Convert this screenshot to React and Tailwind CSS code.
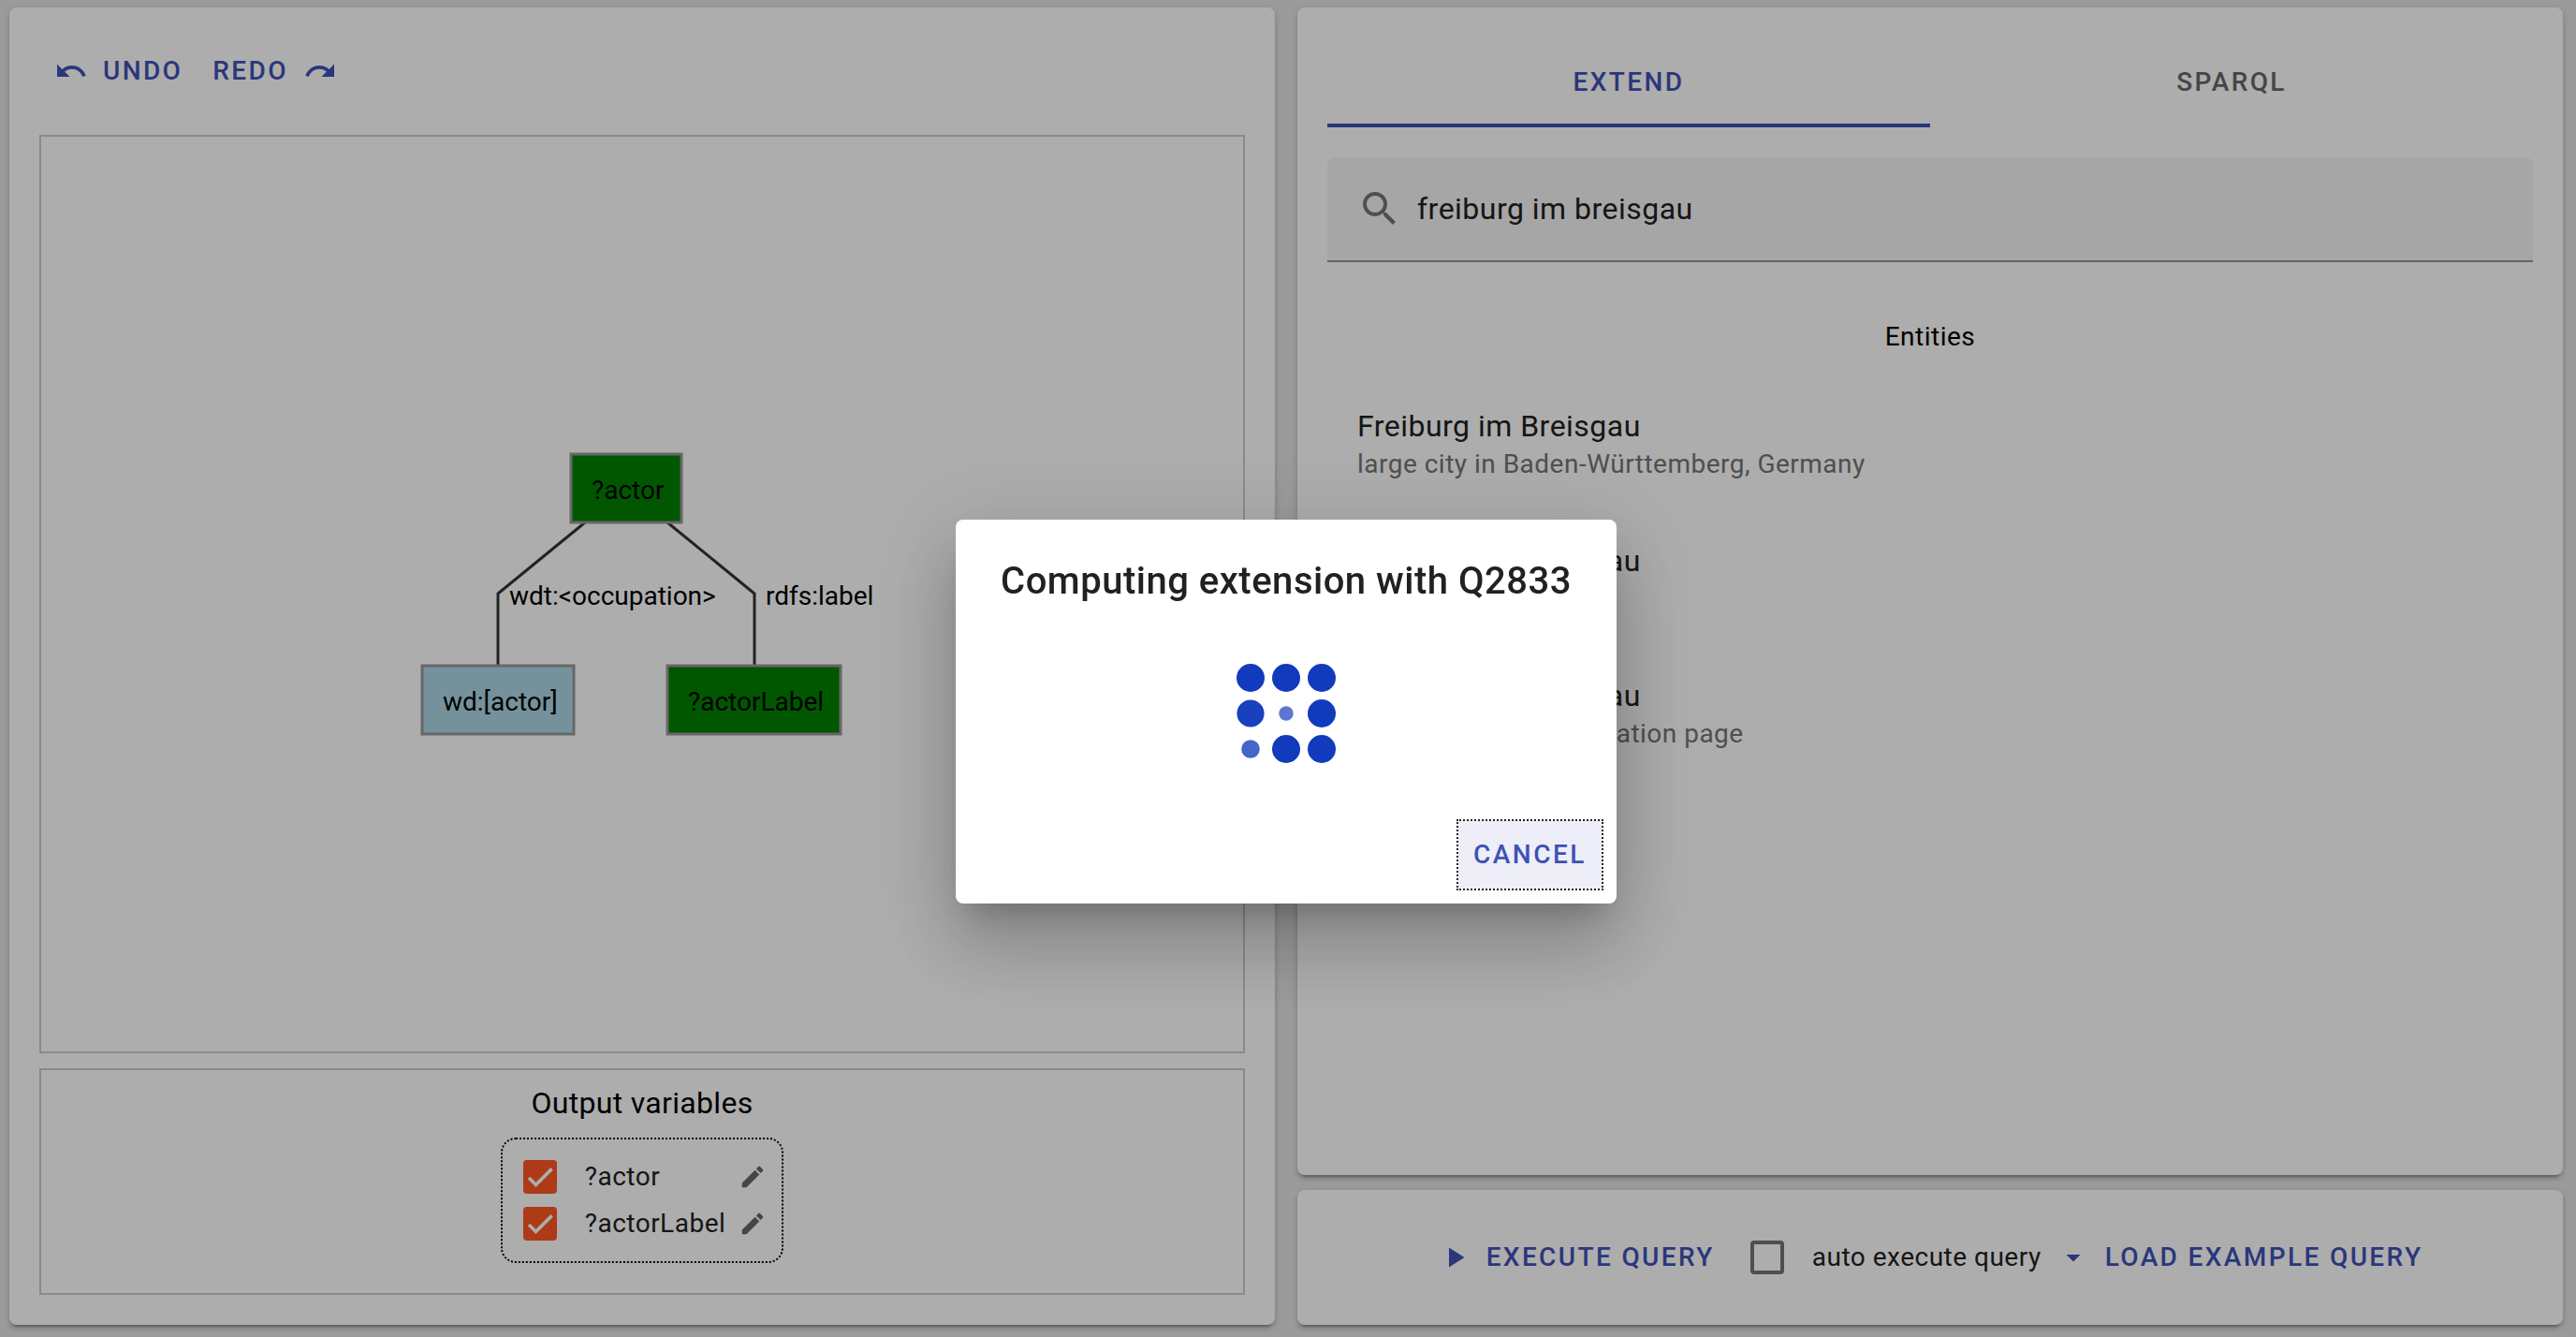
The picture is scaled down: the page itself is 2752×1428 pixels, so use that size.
import React from "react";

const ICONS = {
  undo: "M12.5 8c-2.65 0-5.05.99-6.9 2.6L2 7v9h9l-3.62-3.62c1.39-1.16 3.16-1.88 5.12-1.88 3.54 0 6.55 2.31 7.6 5.5l2.37-.78C21.08 11.03 17.15 8 12.5 8z",
  redo: "M18.4 10.6C16.55 8.99 14.15 8 11.5 8c-4.65 0-8.58 3.03-9.96 7.22L3.9 16c1.05-3.19 4.05-5.5 7.6-5.5 1.95 0 3.73.72 5.12 1.88L13 16h9V7l-3.6 3.6z",
  play: "M8 5v14l11-7z",
  dropDown: "M7 10l5 5 5-5z",
  edit: "M3 17.25V21h3.75L17.81 9.94l-3.75-3.75L3 17.25zM20.71 7.04c.39-.39.39-1.02 0-1.41l-2.34-2.34c-.39-.39-1.02-.39-1.41 0l-1.83 1.83 3.75 3.75 1.83-1.83z",
  search:
    "M15.5 14h-.79l-.28-.27C15.41 12.59 16 11.11 16 9.5 16 5.91 13.09 3 9.5 3S3 5.91 3 9.5 5.91 16 9.5 16c1.61 0 3.09-.59 4.23-1.57l.27.28v.79l5 4.99L20.49 19l-4.99-5zm-6 0C7.01 14 5 11.99 5 9.5S7.01 5 9.5 5 14 7.01 14 9.5 11.99 14 9.5 14z",
};

function Icon({ name, className }) {
  return (
    <svg viewBox="0 0 24 24" fill="currentColor" aria-hidden="true" className={className}>
      <path d={ICONS[name]} />
    </svg>
  );
}

function TextButton({ icon, trailingIcon, children }) {
  return (
    <button
      type="button"
      className="flex h-18 items-center gap-4 rounded-lg px-4 text-[28px] font-medium tracking-[0.085em] text-[#3f51b5] uppercase"
    >
      {icon && <Icon name={icon} className="size-9" />}
      {children}
      {trailingIcon && <Icon name={trailingIcon} className="size-9" />}
    </button>
  );
}

function Card({ className, children }) {
  return (
    <section
      className={
        "rounded-lg bg-white shadow-[0_6px_2px_-4px_rgba(0,0,0,0.2),0_4px_4px_0_rgba(0,0,0,0.14),0_2px_10px_0_rgba(0,0,0,0.12)] " +
        className
      }
    >
      {children}
    </section>
  );
}

function Checkbox({ id, defaultChecked }) {
  return (
    <span className="relative flex size-9 shrink-0">
      <input
        id={id}
        type="checkbox"
        defaultChecked={defaultChecked}
        className="peer size-9 appearance-none rounded-sm border-4 border-[#757575] checked:border-[#ff5722] checked:bg-[#ff5722]"
      />
      <svg
        viewBox="0 0 24 24"
        fill="none"
        aria-hidden="true"
        className="pointer-events-none absolute inset-1 hidden size-7 stroke-white peer-checked:block"
      >
        <path d="M1.73 12.91L8.1 19.28 22.79 4.59" strokeWidth="3.12" />
      </svg>
    </span>
  );
}

function QueryGraph() {
  return (
    <svg viewBox="436 481 500 307" className="h-[307px] w-[500px] text-[28px]" role="img" aria-label="Query graph">
      <g fill="none" stroke="#333" strokeWidth="3">
        <path d="M625 558L532 634V711" />
        <path d="M713 558L806 634V711" />
      </g>
      <g stroke="#999" strokeWidth="3">
        <rect x="610" y="485" width="118" height="73" fill="#008000" />
        <rect x="451" y="711" width="162" height="73" fill="#add8e6" />
        <rect x="713" y="711" width="185" height="73" fill="#008000" />
      </g>
      <g fill="#000">
        <text x="632" y="533">?actor</text>
        <text x="473" y="759">wd:[actor]</text>
        <text x="735" y="759">?actorLabel</text>
        <text x="544" y="646">wdt:&lt;occupation&gt;</text>
        <text x="818" y="646">rdfs:label</text>
      </g>
    </svg>
  );
}

function OutputVariable({ name }) {
  const id = "output-" + name.slice(1);
  return (
    <li className="flex items-center">
      <Checkbox id={id} defaultChecked />
      <label htmlFor={id} className="ml-[30px] text-[28px] leading-9 tracking-[0.0175em] text-[#212121]">
        {name}
      </label>
      <button type="button" aria-label={"Rename " + name} className="ml-auto pl-[14px] text-[#666]">
        <Icon name="edit" className="size-[30px]" />
      </button>
    </li>
  );
}

const ENTITIES = [
  { id: 1, label: "Freiburg im Breisgau", description: "large city in Baden-Württemberg, Germany" },
  { id: 2, label: "Freiburg im Breisgau", description: "" },
  { id: 3, label: "Freiburg im Breisgau", description: "Wikimedia disambiguation page" },
];

function EntityList() {
  return (
    <ul className="mt-[14px] py-4">
      {ENTITIES.map((entity) => (
        <li key={entity.id}>
          <button type="button" className="flex h-36 w-full flex-col px-8 pt-6 text-left">
            <span className="text-[32px] leading-[42px] tracking-[0.015em] text-[#212121]">{entity.label}</span>
            <span className="text-[28px] leading-10 tracking-[0.0175em] text-[#757575]">{entity.description}</span>
          </button>
        </li>
      ))}
    </ul>
  );
}

function Tab({ active, children }) {
  return (
    <button
      type="button"
      role="tab"
      aria-selected={active}
      className={
        "h-24 flex-1 border-y-4 border-t-transparent text-[28px] font-medium tracking-[0.085em] uppercase " +
        (active ? "border-b-[#3f51b5] text-[#3f51b5]" : "border-b-transparent text-[#666]")
      }
    >
      {children}
    </button>
  );
}

const DOTS = [
  { r: 15, o: 1 },
  { r: 15, o: 1 },
  { r: 15, o: 1 },
  { r: 14.6, o: 0.97 },
  { r: 7.7, o: 0.69 },
  { r: 15, o: 1 },
  { r: 9.8, o: 0.78 },
  { r: 15, o: 1 },
  { r: 15, o: 1 },
];

function Spinner() {
  return (
    <svg viewBox="0 0 106 106" fill="#123abc" className="size-[106px]" role="img" aria-label="Loading">
      {DOTS.map((dot, i) => (
        <circle key={i} cx={15 + (i % 3) * 38} cy={15 + Math.floor(i / 3) * 38} r={dot.r} opacity={dot.o} />
      ))}
    </svg>
  );
}

function ProgressDialog() {
  return (
    <div className="fixed inset-0 flex items-center justify-center bg-black/32 pt-[92px] pr-1">
      <div
        role="dialog"
        aria-modal="true"
        aria-labelledby="dialog-title"
        className="flex flex-col items-center rounded-lg bg-white pt-9 pb-4 shadow-[0_22px_30px_-14px_rgba(0,0,0,0.2),0_48px_76px_6px_rgba(0,0,0,0.14),0_18px_92px_16px_rgba(0,0,0,0.12)]"
      >
        <h2 id="dialog-title" className="px-12 text-[40px] leading-[60px] font-medium tracking-[0.0125em] text-[#212121]">
          Computing extension with Q2833
        </h2>
        <div className="pt-[58px] pb-[62px]">
          <Spinner />
        </div>
        <button
          type="button"
          className="mr-4 h-18 self-end bg-[#eeeef8] px-4 text-[28px] font-medium tracking-[0.09em] text-[#3f51b5] uppercase outline-2 outline-[#212121] outline-dotted"
        >
          Cancel
        </button>
      </div>
    </div>
  );
}

export default function App() {
  return (
    <div className="min-h-screen bg-[#e5e5e5] font-[Roboto,sans-serif] text-black">
      <main className="grid min-h-screen grid-cols-2 gap-6 pt-2 pr-[14px] pb-[13px] pl-[10px]">
        <Card className="flex flex-col p-8">
          <div className="flex">
            <TextButton icon="undo">Undo</TextButton>
            <TextButton trailingIcon="redo">Redo</TextButton>
          </div>
          <div className="mt-8 flex flex-1 items-center justify-center border-2 border-[#ccc]">
            <QueryGraph />
          </div>
          <div className="mt-4 flex flex-col items-center border-2 border-[#ccc] pt-3 pb-8">
            <h2 className="text-[32px] leading-[46px] tracking-[0.01em]">Output variables</h2>
            <ul className="mt-[14px] flex flex-col gap-[14px] rounded-2xl border-2 border-dotted border-black py-[22px] pr-4 pl-[22px]">
              <OutputVariable name="?actor" />
              <OutputVariable name="?actorLabel" />
            </ul>
          </div>
        </Card>

        <div className="flex flex-col gap-4">
          <Card className="flex flex-1 flex-col p-8">
            <div role="tablist" className="flex">
              <Tab active>Extend</Tab>
              <Tab active={false}>SPARQL</Tab>
            </div>
            <div className="mt-8 flex h-28 items-center gap-4 rounded-t-lg border-b-2 border-[#949494] bg-[#f5f5f5] px-8">
              <Icon name="search" className="size-12 text-[#757575]" />
              <input
                type="text"
                aria-label="Search entities"
                defaultValue="freiburg im breisgau"
                className="min-w-0 flex-1 bg-transparent text-[32px] leading-14 tracking-[0.015em] text-[#212121] outline-none"
              />
            </div>
            <h3 className="mt-15 text-center text-[28px] leading-10 tracking-[0.0175em]">Entities</h3>
            <EntityList />
          </Card>

          <Card className="flex items-center justify-center py-9">
            <TextButton icon="play">Execute query</TextButton>
            <div className="flex items-center pl-[22px]">
              <Checkbox id="auto-execute" />
              <label htmlFor="auto-execute" className="pl-[30px] text-[28px] leading-10 tracking-[0.0175em] text-[#212121]">
                auto execute query
              </label>
            </div>
            <TextButton icon="dropDown">Load example query</TextButton>
          </Card>
        </div>
      </main>
      <ProgressDialog />
    </div>
  );
}
